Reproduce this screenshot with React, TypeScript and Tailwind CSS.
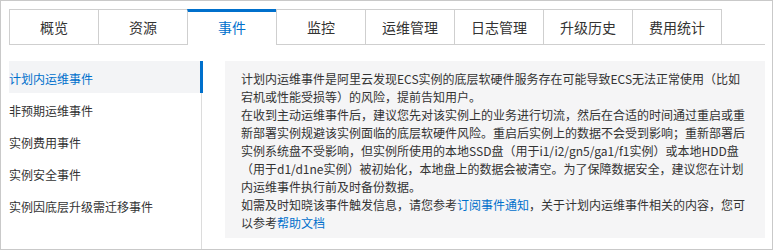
import React from "react";

const tabs = ["概览", "资源", "事件", "监控", "运维管理", "日志管理", "升级历史", "费用统计"];
const items = ["计划内运维事件", "非预期运维事件", "实例费用事件", "实例安全事件", "实例因底层升级需迁移事件"];

export default function App() {
  return (
    <div
      className="w-[773px] h-[250px] border border-[#c9c9c9] bg-white pl-[8px] pt-[8px] flex flex-col text-[#333]"
      style={{ fontFamily: '"Microsoft YaHei", "Noto Sans CJK SC", "Noto Sans", sans-serif' }}
    >
      <div className="w-[756px] flex items-end border-b border-[#cfcfcf] h-[36px]">
        {tabs.map((t, i) => {
          const active = i === 2;
          const last = i === tabs.length - 1;
          return (
            <div
              key={t}
              className={
                "w-[89px] flex items-center justify-center text-[14px] border-l border-[#cfcfcf] " +
                (last ? "w-[90px] border-r " : "") +
                (active
                  ? "h-[36px] -mb-px bg-white border-t-[3px] border-t-[#0070cc] text-[#0070cc] pb-[2px]"
                  : "h-[35px] border-t")
              }
            >
              {t}
            </div>
          );
        })}
      </div>
      <div className="flex flex-1 mt-[16px]">
        <div className="w-[193px] border-r border-[#dcdcdc] flex flex-col">
          {items.map((t, i) => {
            const active = i === 0;
            return (
              <div
                key={t}
                className={
                  "relative h-[32px] flex items-center text-[12px] pt-[3px] " +
                  (active ? "bg-[#f3f4f6] text-[#0070cc]" : "")
                }
              >
                {t}
                {active && <span className="absolute right-[-2px] top-0 bottom-0 w-[3px] bg-[#0070cc]" />}
              </div>
            );
          })}
        </div>
        <div className="ml-[23px] w-[540px] h-[177px] bg-[#f5f5f6] pl-[16px] pt-[9px] text-[12px] leading-[18px] whitespace-nowrap">
          <p>
            计划内运维事件是阿里云发现ECS实例的底层软硬件服务存在可能导致ECS无法正常使用（比如
            <br />
            宕机或性能受损等）的风险，提前告知用户。
          </p>
          <p>
            在收到主动运维事件后，建议您先对该实例上的业务进行切流，然后在合适的时间通过重启或重
            <br />
            新部署实例规避该实例面临的底层软硬件风险。重启后实例上的数据不会受到影响；重新部署后
            <br />
            实例系统盘不受影响，但实例所使用的本地SSD盘（用于i1/i2/gn5/ga1/f1实例）或本地HDD盘
            <br />
            （用于d1/d1ne实例）被初始化，本地盘上的数据会被清空。为了保障数据安全，建议您在计划
            <br />
            内运维事件执行前及时备份数据。
          </p>
          <p>
            如需及时知晓该事件触发信息，请您参考<a className="text-[#0070cc]">订阅事件通知</a>，关于计划内运维事件相关的内容，您可
            <br />
            以参考<a className="text-[#0070cc]">帮助文档</a>
          </p>
        </div>
      </div>
    </div>
  );
}
